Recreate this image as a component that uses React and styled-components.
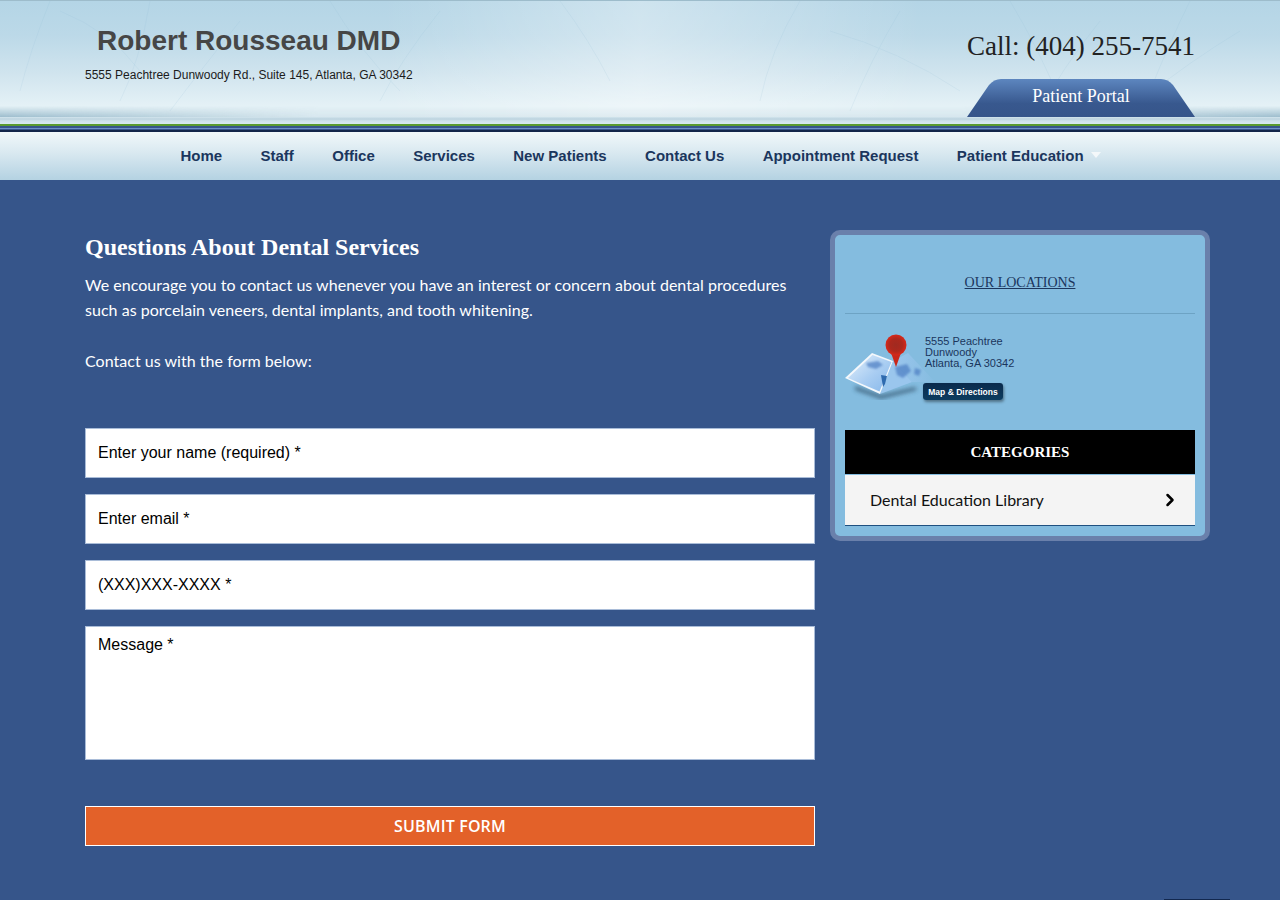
import React from "react";
import styled, { createGlobalStyle } from "styled-components";
import { ChevronRight } from "lucide-react";

const GlobalStyle = createGlobalStyle`
  html, body {
    margin: 0;
    padding: 0;
    height: 900px;
    overflow: hidden;
    background: #36558a;
    font-family: "Liberation Sans", Arial, sans-serif;
  }
`;

const Header = styled.header`
  position: relative;
  height: 117px;
  display: flex;
  justify-content: space-between;
  background:
    linear-gradient(90deg, rgba(255,255,255,0) 30%, rgba(255,255,255,0.35) 50%, rgba(255,255,255,0) 72%),
    linear-gradient(180deg, #b4d5e6 0%, #bcd9e8 30%, #d0e4ee 62%, #e4f1f6 90%, #e4f1f6 100%);
  border-top: 1px solid #9dbccb;
  box-sizing: border-box;
`;

const Fibres = styled.svg`
  position: absolute;
  inset: 0;
  width: 100%;
  height: 100%;
`;

const Brand = styled.div`
  position: relative;
  margin-left: 85px;
  padding-top: 24px;
`;

const Title = styled.h1`
  margin: 0 0 0 12px;
  font-size: 28px;
  line-height: 32px;
  font-weight: bold;
  color: #464646;
`;

const Address = styled.p`
  margin: 10px 0 0;
  font-size: 12px;
  line-height: 16px;
  color: #1b1b1b;
`;

const Contact = styled.div`
  position: relative;
  margin-right: 85px;
  width: 228px;
  display: flex;
  flex-direction: column;
  align-items: center;
`;

const Phone = styled.div`
  margin-top: 28px;
  font-family: "Liberation Serif", "Times New Roman", serif;
  font-size: 27px;
  line-height: 34px;
  color: #222;
  white-space: nowrap;
`;

const PortalTab = styled.a`
  position: relative;
  margin-top: 15px;
  width: 228px;
  height: 39px;
  display: flex;
  align-items: center;
  justify-content: center;
  font-family: "Liberation Serif", "Times New Roman", serif;
  font-size: 18px;
  color: #fff;
`;

const PortalShape = styled.svg`
  position: absolute;
  inset: 0;
  width: 100%;
  height: 100%;
`;

const PortalLabel = styled.span`
  position: relative;
  margin-top: -2px;
`;

const Stripes = styled.div`
  height: 15px;
  background: linear-gradient(
    180deg,
    #d3e5ed 0,
    #bcd3df 2px,
    #cfe2eb 4px,
    #d8e9f0 7px,
    #5a9a2e 7px,
    #5a9a2e 9px,
    #36558a 9px,
    #36558a 11px,
    #6d8fc7 11px,
    #6d8fc7 12px,
    #36558a 12px,
    #36558a 13px,
    #13264a 13px,
    #13264a 15px
  );
`;

const Nav = styled.nav`
  height: 48px;
  box-sizing: border-box;
  padding: 0 16px 2px 0;
  display: flex;
  justify-content: center;
  align-items: center;
  gap: 38.4px;
  background: linear-gradient(180deg, #f1f8fa 0%, #d8e8f0 45%, #b4d2e2 100%);
`;

const NavItem = styled.a`
  font-size: 15px;
  font-weight: bold;
  color: #1b365d;
  display: flex;
  align-items: center;
`;

const Caret = styled.span`
  width: 0;
  height: 0;
  margin: 0 -17px 0 7px;
  border-left: 5px solid transparent;
  border-right: 5px solid transparent;
  border-top: 6px solid #f4f8fa;
`;

const Main = styled.main`
  display: flex;
  justify-content: space-between;
  padding: 50px 70px 0 85px;
  align-items: flex-start;
`;

const Content = styled.section`
  width: 730px;
`;

const Heading = styled.h2`
  margin: 3px 0 0;
  font-family: "Liberation Serif", "Times New Roman", serif;
  font-size: 24px;
  line-height: 28px;
  font-weight: bold;
  color: #fff;
`;

const Lead = styled.p`
  margin: 11px 0 0;
  font-family: Lato, "Open Sans", sans-serif;
  font-size: 16px;
  letter-spacing: 0.03px;
  line-height: 25.4px;
  color: #fff;
`;

const Form = styled.form`
  margin-top: 54px;
  display: flex;
  flex-direction: column;
  gap: 16px;
`;

const Field = styled.div`
  height: ${(p) => (p.$tall ? "134px" : "50px")};
  box-sizing: border-box;
  background: #fff;
  border: 1px solid #a9bcd8;
  padding: ${(p) => (p.$tall ? "8px 12px" : "0 12px")};
  display: flex;
  align-items: ${(p) => (p.$tall ? "flex-start" : "center")};
  font-size: 16px;
  line-height: 20px;
  color: #000;
`;

const Submit = styled.button`
  margin-top: 30px;
  height: 40px;
  width: 100%;
  display: block;
  background: #e36129;
  border: 1px solid #fff;
  color: #fff;
  font-family: "Open Sans", sans-serif;
  font-size: 16px;
  font-weight: 600;
  letter-spacing: 0.15px;
`;

const Sidebar = styled.aside`
  width: 380px;
  height: 311px;
  box-sizing: border-box;
  background: #84bcdf;
  border: 5px solid #6a80ab;
  border-radius: 10px;
  padding: 0 10px;
`;

const LocationsTitle = styled.a`
  display: block;
  padding: 39px 0 21px;
  border-bottom: 1px solid #6da3c4;
  text-align: center;
  font-family: "Liberation Serif", "Times New Roman", serif;
  font-size: 14px;
  line-height: 18px;
  color: #1b365d;
  text-decoration: underline;
`;

const Location = styled.div`
  position: relative;
  height: 116px;
`;

const MapArt = styled.svg`
  position: absolute;
  left: 0;
  top: 20px;
  width: 92px;
  height: 66px;
`;

const LocationText = styled.div`
  position: absolute;
  left: 80px;
  top: 22px;
  font-size: 11px;
  line-height: 11px;
  color: #1b365d;
`;

const DirectionsButton = styled.a`
  position: absolute;
  left: 78px;
  top: 69px;
  width: 80px;
  height: 17px;
  box-sizing: border-box;
  border-radius: 3px;
  background: linear-gradient(180deg, #0a2a4c, #0d3c5f);
  box-shadow: 1px 2px 3px rgba(0, 0, 0, 0.4);
  color: #fff;
  font-size: 8.5px;
  font-weight: bold;
  line-height: 18px;
  text-align: center;
`;

const CategoriesHead = styled.div`
  height: 45px;
  background: #000;
  color: #fff;
  text-align: center;
  font-family: "Liberation Serif", "Times New Roman", serif;
  font-size: 15px;
  line-height: 44px;
  font-weight: bold;
  border-bottom: 1px solid #84bcdf;
  box-sizing: border-box;
`;

const CategoryRow = styled.div`
  height: 51px;
  box-sizing: border-box;
  background: #f4f4f4;
  border-bottom: 1px solid #1f5080;
  padding: 0 15px 2px 25px;
  display: flex;
  align-items: center;
  justify-content: space-between;
  font-family: Lato, "Open Sans", sans-serif;
  font-size: 16px;
  color: #111;
`;

const RowChevron = styled(ChevronRight)`
  margin-top: 2px;
`;

const BackToTop = styled.div`
  position: absolute;
  left: 1164px;
  top: 899px;
  width: 66px;
  height: 1px;
  background: #12284f;
`;

const HeaderFibres = () => (
  <Fibres viewBox="0 0 1280 116" preserveAspectRatio="none">
    <defs>
      <linearGradient id="edge" x1="0" y1="0" x2="1" y2="0">
        <stop offset="0" stopColor="#7fa7bc" stopOpacity="0.7" />
        <stop offset="0.25" stopColor="#7fa7bc" stopOpacity="0.12" />
        <stop offset="0.75" stopColor="#7fa7bc" stopOpacity="0.12" />
        <stop offset="1" stopColor="#7fa7bc" stopOpacity="0.7" />
      </linearGradient>
      <linearGradient id="fade" x1="0" y1="0" x2="0" y2="1">
        <stop offset="0" stopColor="#fff" stopOpacity="0" />
        <stop offset="1" stopColor="#fff" />
      </linearGradient>
      <mask id="fadeMask">
        <rect x="0" y="105" width="1280" height="11" fill="url(#fade)" />
      </mask>
    </defs>
    <g stroke="#8fbad2" strokeWidth="1" opacity="0.14" fill="none">
      <path d="M50 0 Q30 50 20 90 M60 10 Q110 30 140 70 M150 0 Q140 60 120 100 M240 20 Q200 70 170 110 M330 0 Q360 50 400 90" />
      <path d="M440 10 Q400 60 380 100 M800 0 Q770 50 760 100 M830 30 Q900 50 960 90 M900 10 Q870 60 850 110 M1010 0 Q1040 50 1060 100" />
      <path d="M1100 20 Q1060 70 1040 110 M1190 0 Q1170 40 1150 90 M1240 30 Q1190 60 1140 100 M560 0 Q590 40 610 80" />
    </g>
    <rect x="0" y="105" width="1280" height="11" fill="url(#edge)" mask="url(#fadeMask)" />
  </Fibres>
);

const MapIllustration = () => (
  <MapArt viewBox="0 0 92 66">
    <defs>
      <linearGradient id="sheet" x1="0" y1="0" x2="1" y2="1">
        <stop offset="0" stopColor="#e3f0fb" />
        <stop offset="0.55" stopColor="#a9cdf2" />
        <stop offset="1" stopColor="#86b7ea" />
      </linearGradient>
      <linearGradient id="sheetRight" x1="0" y1="0" x2="1" y2="0">
        <stop offset="0" stopColor="#9cc6ee" stopOpacity="0.95" />
        <stop offset="1" stopColor="#9cc6ee" stopOpacity="0.05" />
      </linearGradient>
      <radialGradient id="pinHead" cx="0.5" cy="0.5" r="0.5">
        <stop offset="0" stopColor="#a02a20" />
        <stop offset="0.6" stopColor="#ad281d" />
        <stop offset="1" stopColor="#d8281a" />
      </radialGradient>
      <filter id="soft" x="-20%" y="-100%" width="140%" height="300%">
        <feGaussianBlur stdDeviation="2.2" />
      </filter>
      <filter id="softer" x="-20%" y="-20%" width="140%" height="140%">
        <feGaussianBlur stdDeviation="0.8" />
      </filter>
    </defs>
    <path d="M10 52 L36 61 L70 53 L72 56 L36 65 L10 56 Z" fill="#2a4a62" opacity="0.7" filter="url(#soft)" />
    <path d="M48 27 L63 19 L90 48 L67 48 Z" fill="url(#sheetRight)" />
    <path d="M48 27 L67 48 L35 60 Z" fill="#9cc6ee" opacity="0.9" />
    <path d="M0 44 L27 19 L48 27 L35 60 Z" fill="#f4f8fc" />
    <path d="M3 44 L27.5 21 L46.5 28 L34.5 57.5 Z" fill="url(#sheet)" />
    <g fill="#4c7dc2" filter="url(#softer)" opacity="0.7">
      <path d="M21 29 L33 27 L38 31 L31 35 L23 33 Z" />
      <path d="M50 33 L62 30 L66 37 L58 44 L52 41 Z" />
      <path d="M70 34 L76 36 L74 42 L69 40 Z" />
    </g>
    <path d="M36 41 L42 42 L40 50 L38 53 L37 47 Z" fill="#2e6aae" />
    <path d="M51 33 L45 16 L57 16 Z" fill="#c9261a" />
    <circle cx="51" cy="11" r="10.5" fill="url(#pinHead)" />
  </MapArt>
);

export default function App() {
  return (
    <>
      <GlobalStyle />
      <Header>
        <HeaderFibres />
        <Brand>
          <Title>Robert Rousseau DMD</Title>
          <Address>5555 Peachtree Dunwoody Rd., Suite 145, Atlanta, GA 30342</Address>
        </Brand>
        <Contact>
          <Phone>Call: (404) 255-7541</Phone>
          <PortalTab>
            <PortalShape viewBox="0 0 228 39" preserveAspectRatio="none">
              <defs>
                <linearGradient id="tab" x1="0" y1="0" x2="0" y2="1">
                  <stop offset="0" stopColor="#5d86bf" />
                  <stop offset="0.65" stopColor="#38588e" />
                  <stop offset="1" stopColor="#36558a" />
                </linearGradient>
              </defs>
              <path d="M0 39 L22 7 Q27 1 34 1 L194 1 Q201 1 206 7 L228 39 Z" fill="url(#tab)" />
            </PortalShape>
            <PortalLabel>Patient Portal</PortalLabel>
          </PortalTab>
        </Contact>
      </Header>
      <Stripes />
      <Nav>
        <NavItem>Home</NavItem>
        <NavItem>Staff</NavItem>
        <NavItem>Office</NavItem>
        <NavItem>Services</NavItem>
        <NavItem>New Patients</NavItem>
        <NavItem>Contact Us</NavItem>
        <NavItem>Appointment Request</NavItem>
        <NavItem>
          Patient Education
          <Caret />
        </NavItem>
      </Nav>
      <Main>
        <Content>
          <Heading>Questions About Dental Services</Heading>
          <Lead>
            We encourage you to contact us whenever you have an interest or concern about dental procedures such as porcelain veneers, dental implants, and tooth whitening.
            <br />
            <br />
            Contact us with the form below:
          </Lead>
          <Form>
            <Field>Enter your name (required) *</Field>
            <Field>Enter email *</Field>
            <Field>(XXX)XXX-XXXX *</Field>
            <Field $tall>Message *</Field>
            <Submit type="button">SUBMIT FORM</Submit>
          </Form>
        </Content>
        <Sidebar>
          <LocationsTitle>OUR LOCATIONS</LocationsTitle>
          <Location>
            <MapIllustration />
            <LocationText>
              5555 Peachtree
              <br />
              Dunwoody
              <br />
              Atlanta, GA 30342
            </LocationText>
            <DirectionsButton>Map &amp; Directions</DirectionsButton>
          </Location>
          <CategoriesHead>CATEGORIES</CategoriesHead>
          <CategoryRow>
            Dental Education Library
            <RowChevron size={20} strokeWidth={3} color="#000" />
          </CategoryRow>
        </Sidebar>
      </Main>
      <BackToTop />
    </>
  );
}
